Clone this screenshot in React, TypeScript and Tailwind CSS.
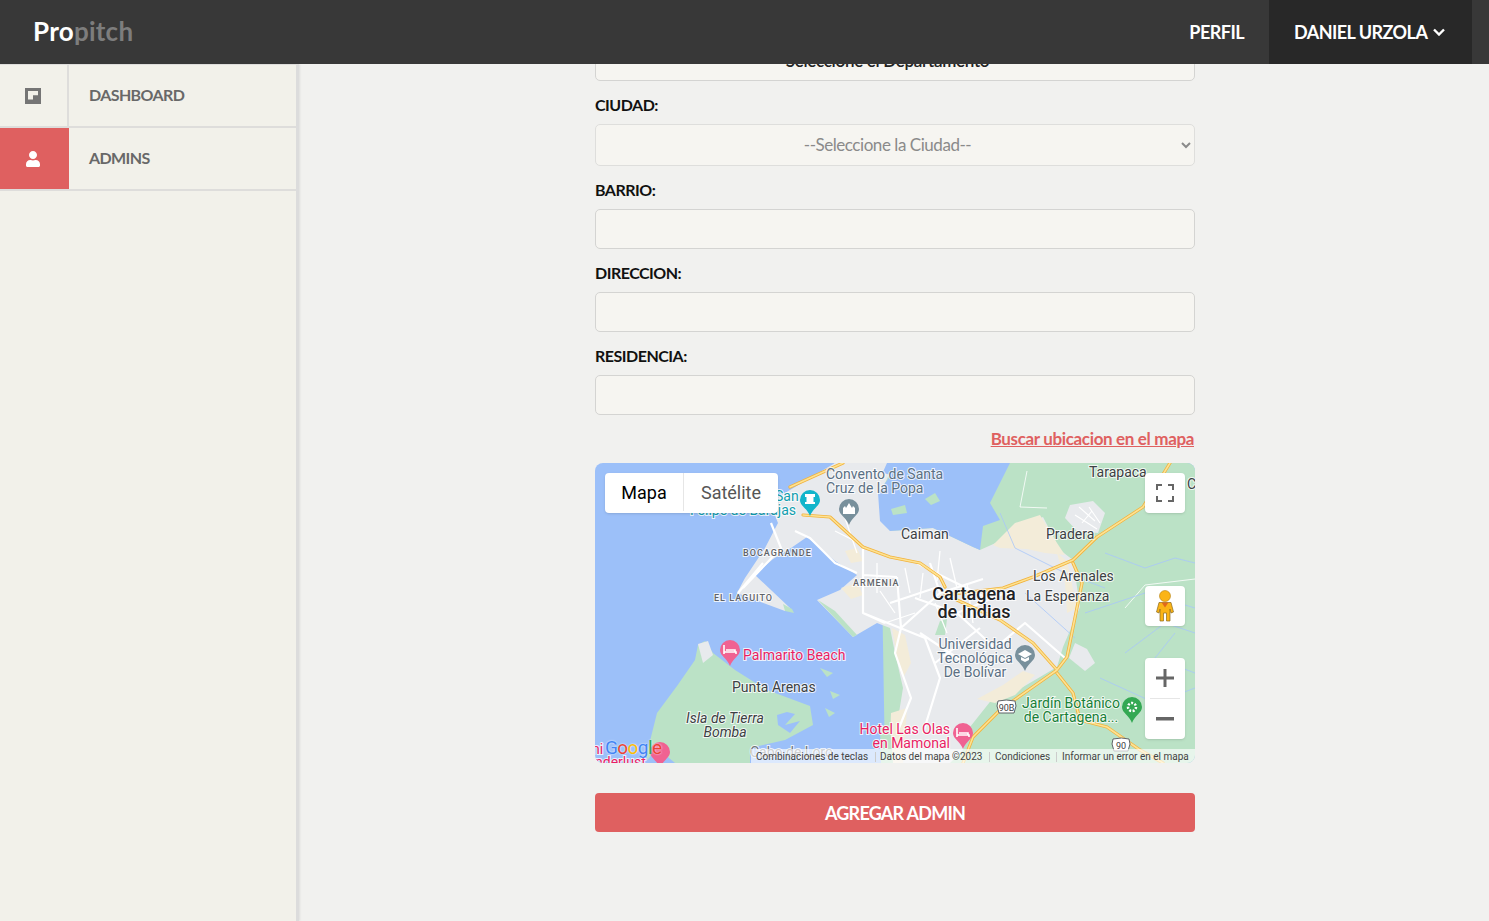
import { FaUser } from "react-icons/fa"

const uiFont = { fontFamily: '"Lato", "Noto Sans", sans-serif' }

const yellowRoads =
  "M195 24 248 0M208 52 235 54 268 84 295 94 325 100 345 114 350 124M362 137 405 157 438 180 462 207M350 132 408 125 438 114 478 97 502 74 548 44 575 0M478 100 487 120 472 194 462 207 405 247 378 274 373 287 368 300M462 210 478 230 485 257 512 264 545 287 568 300"

function FlipIcon() {
  return (
    <svg width="16" height="16" viewBox="0 0 16 16">
      <rect width="16" height="16" fill="#757575" />
      <path d="M3 3h10v4.2H8V11.5H3z" fill="#f2f1ea" />
    </svg>
  )
}

function SideItem({ label, active, icon }: { label: string; active?: boolean; icon: React.ReactNode }) {
  return (
    <div className="flex h-[63px] border-b-2 border-[#dedddb]">
      <div className={`flex w-[69px] shrink-0 items-center justify-center ${active ? "bg-[#df6060] pr-[3px] text-white" : "border-r-2 border-[#dedddb] pr-px"}`}>
        {icon}
      </div>
      <div className="flex flex-1 items-center pb-[2px] pl-5 text-[16px] font-bold tracking-[-0.6px] text-[#686868]">{label}</div>
    </div>
  )
}

function Field({ label, children }: { label: string; children: React.ReactNode }) {
  return (
    <>
      <div className="flex h-[43px] items-end pb-[7px] text-[16px] leading-6 font-bold tracking-[-0.5px] text-[#111]">{label}</div>
      {children}
    </>
  )
}

function TextInput() {
  return <input className="block h-10 w-full rounded-[5px] border border-[#d4d4d2] bg-[#f6f5f1]" />
}

function Label({ x, y, children, fill = "#3c4043", size = 14, weight = 400, italic, anchor = "start", spacing }: {
  x: number
  y: number
  children: string
  fill?: string
  size?: number
  weight?: number
  italic?: boolean
  anchor?: "start" | "middle" | "end"
  spacing?: number
}) {
  return (
    <text
      x={x}
      y={y}
      fill={fill}
      fontSize={size}
      fontWeight={weight}
      fontStyle={italic ? "italic" : "normal"}
      textAnchor={anchor}
      letterSpacing={spacing}
      stroke="#ffffff"
      strokeOpacity="0.8"
      strokeWidth="2"
      paintOrder="stroke"
      fontFamily="Roboto, sans-serif"
    >
      {children}
    </text>
  )
}

function Pin({ x, y, color, r = 10 }: { x: number; y: number; color: string; r?: number }) {
  return (
    <path d={`M${x - r} ${y}a${r} ${r} 0 1 1 ${2 * r} 0c0 6-${r * 0.7} 8-${r} ${r * 1.6}c-${r * 0.3}-${r * 0.8}-${r}-${r * 1}-${r}-${r * 1.6}z`} fill={color} />
  )
}

function MapArt() {
  return (
    <svg viewBox="0 0 600 300" className="block h-[300px] w-[600px]">
      <rect width="600" height="300" fill="#9cc0f9" />
      {/* tierra firme */}
      <path d="M285 0H600V300H290z" fill="#bbe2c6" />
      {/* ciudad */}
      <path
        d="M190 30 240 0H300L285 30 295 68 338 65 378 84 385 87 405 78 430 62 448 54 465 87 478 97 485 144 468 184 462 204 428 224 402 230 375 264 368 287 355 300H300L302 262 308 225 300 190 295 165 282 160 258 174 222 137 245 127 262 112 240 98 212 74 196 85 178 96 160 112 195 145 190 148 142 130 150 115 170 85 183 60 175 40z"
        fill="#e8eaed"
      />
      {/* bahia norte */}
      <path d="M248 0H415L395 40 405 57 388 63 385 87 378 84 338 65 295 68 285 58 283 30 296 12z" fill="#9cc0f9" />
      <path d="M240 0H292L283 20 280 45 262 40 240 32 215 25z" fill="#e8eaed" />
      <path d="M330 36 340 30 345 38 336 42z" fill="#bbe2c6" />
      <path d="M296 46 310 42 312 50 298 52z" fill="#bbe2c6" />
      {/* arena */}
      <path d="M475 42 498 38 510 50 503 70 482 68 470 55z" fill="#e8eaed" />
      <path d="M420 60 445 52 462 80 470 92 450 90 432 86 405 85 398 82z" fill="#f3ecd9" />
      <path d="M462 90 472 98 482 145 472 150 470 120z" fill="#f3ecd9" />
      <path d="M480 180 492 186 500 200 490 208 474 195z" fill="#e8eaed" />
      <path d="M297 165 310 172 316 200 308 215 302 195z" fill="#f3ecd9" />
      <path d="M408 222 428 208 440 212 420 232 400 240 382 236z" fill="#f3ecd9" />
      <path d="M296 250 312 245 308 300H294z" fill="#f3ecd9" />
      <path d="M246 125 262 120 268 132 256 136z" fill="#f3ecd9" />
      <path d="M250 88 262 85 268 98 256 100z" fill="#f3ecd9" />
      <path d="M345 158 352 156 350 172 340 172z" fill="#bbe2c6" />
      <path d="M188 141 197 146 199 150 190 148z" fill="#bbe2c6" />
      <path d="M223 137 235 150 258 174 262 172 240 148z" fill="#bbe2c6" />
      <path d="M285 265 295 258 298 300H286z" fill="#bbe2c6" />
      {/* Tierra Bomba */}
      <path d="M110 178 118 190 140 207 172 227 215 243 218 262 190 277 155 285 155 300H52L52 290 62 250 82 223 100 197 103 182z" fill="#bbe2c6" />
      <path d="M103 181 113 178 118 192 108 200z" fill="#e8eaed" />
      <path d="M182 252 192 249 200 251 190 262 205 258 195 270 183 262z" fill="#9cc0f9" />
      <path d="M175 288 195 280 205 295 195 300H170z" fill="#9cc0f9" />
      <path d="M50 300 62 285 80 300z" fill="#9cc0f9" />
      <path d="M225 205 238 210 232 214zM235 228 245 232 238 236zM230 245 240 250 234 254z" fill="#bbe2c6" />
      {/* calles */}
      <g fill="none" stroke="#ffffff" strokeWidth="2.2" strokeLinejoin="round">
        <path d="M176 60 186 85 148 125M168 100 143 130M200 68 215 75 240 100 262 110M268 85 268 150 290 160M268 112 302 114M268 150 330 175 345 215 328 270M302 114 306 165 300 190 316 235 302 270M306 165 345 130 335 100M320 135 362 150 410 130M345 130 388 116M362 150 400 185 430 160 470 195M322 100 345 112 392 135M295 140 340 125M325 170 370 200M340 200 385 165" />
        <path d="M250 55 262 90M240 68 268 82M285 128 300 150M345 88 342 118M355 95 362 125M372 120 378 160M282 100 282 130M310 105 315 130M328 110 325 135M290 160 320 150M340 140 352 170" strokeWidth="1.3" />
        <path d="M487 60 497 48M480 52 502 66M494 44 505 60M484 44 500 58" strokeWidth="1.1" />
        <path d="M432 8 425 44 452 45M530 145 550 122 600 116" strokeWidth="0.8" />
      </g>
      <g fill="none" stroke="#a8c7fa" strokeWidth="0.8">
        <path d="M405 50 420 85 470 110 510 125M510 90 550 105 580 95 600 100M490 150 550 130 600 145M530 190 570 160 600 170M430 130 480 175M580 170 560 195 600 210M505 215 560 240 600 225" />
      </g>
      <g fill="none" stroke="#f2b33d" strokeWidth="3.2" strokeLinejoin="round" strokeLinecap="round">
        <path d={yellowRoads} />
      </g>
      <g fill="none" stroke="#fde293" strokeWidth="1.6" strokeLinejoin="round" strokeLinecap="round">
        <path d={yellowRoads} />
      </g>
      {/* etiquetas */}
      <Label x={180} y={38} fill="#129eaf">San</Label>
      <Label x={95} y={52} fill="#129eaf">Felipe de Barajas</Label>
      <Pin x={215} y={37} color="#12b5cb" />
      <path d="M210 31h10v3h-1.500v5h1.500v2h-10v-2h1.500v-5h-1.500z" fill="#fff" />
      <Label x={231} y={16} fill="#5b7083">Convento de Santa</Label>
      <Label x={231} y={30} fill="#5b7083">Cruz de la Popa</Label>
      <Pin x={254} y={46} color="#78909c" />
      <path d="M248 51v-6l2-2 1 2 3-5 3 5 1-2 2 2v6z" fill="#fff" />
      <Label x={306} y={76}>Caiman</Label>
      <Label x={494} y={14}>Tarapaca</Label>
      <Label x={592} y={26}>C</Label>
      <Label x={451} y={76}>Pradera</Label>
      <Label x={438} y={118}>Los Arenales</Label>
      <Label x={431} y={138}>La Esperanza</Label>
      <Label x={379} y={137} anchor="middle" size={18} weight={500} fill="#202124">Cartagena</Label>
      <Label x={379} y={155} anchor="middle" size={18} weight={500} fill="#202124">de Indias</Label>
      <Label x={380} y={186} anchor="middle" fill="#5b7083">Universidad</Label>
      <Label x={380} y={200} anchor="middle" fill="#5b7083">Tecnológica</Label>
      <Label x={380} y={214} anchor="middle" fill="#5b7083">De Bolívar</Label>
      <Pin x={430} y={192} color="#78909c" />
      <path d="M423 191 430 187 437 191 430 195zM426 194v3l4 2 4-2v-3l-4 2z" fill="#fff" />
      <Label x={148} y={93} size={9} weight={500} spacing={1} fill="#5f6368">BOCAGRANDE</Label>
      <Label x={258} y={123} size={9} weight={500} spacing={1} fill="#5f6368">ARMENIA</Label>
      <Label x={119} y={138} size={9} weight={500} spacing={1} fill="#5f6368">EL LAGUITO</Label>
      <Pin x={135} y={187} color="#f06292" />
      <path d="M129 182v9M129 189h12v2M131 187h9v2" stroke="#fff" strokeWidth="1.600" fill="none" />
      <Label x={148} y={197} fill="#e91e63">Palmarito Beach</Label>
      <Label x={137} y={229}>Punta Arenas</Label>
      <Label x={130} y={260} anchor="middle" italic>Isla de Tierra</Label>
      <Label x={130} y={274} anchor="middle" italic>Bomba</Label>
      <Label x={355} y={271} anchor="end" fill="#e91e63">Hotel Las Olas</Label>
      <Label x={355} y={285} anchor="end" fill="#e91e63">en Mamonal</Label>
      <Pin x={368} y={270} color="#f06292" />
      <path d="M362 265v9M362 272h12v2M364 270h9v2" stroke="#fff" strokeWidth="1.600" fill="none" />
      <Label x={476} y={245} anchor="middle" fill="#188038">Jardín Botánico</Label>
      <Label x={476} y={259} anchor="middle" fill="#188038">de Cartagena...</Label>
      <Pin x={537} y={244} color="#34a853" />
      <circle cx="537" cy="244" r="4" fill="none" stroke="#fff" strokeWidth="2.500" strokeDasharray="2 1.500" />
      <g>
        <path d="M403 238q8-2 17 0l1 5-2 7h-15l-2-7z" fill="#fff" stroke="#5f6368" />
        <text x="411.500" y="248" textAnchor="middle" fontSize="9" fill="#3c4043" fontFamily="Roboto, sans-serif">90B</text>
      </g>
      <g>
        <path d="M518 276q9-2 16 0l1 5-2 7h-14l-2-7z" fill="#fff" stroke="#5f6368" />
        <text x="526" y="286" textAnchor="middle" fontSize="9" fill="#3c4043" fontFamily="Roboto, sans-serif">90</text>
      </g>
      <Pin x={65} y={289} color="#f06292" />
      <Label x={-3} y={291} fill="#e91e63">ni</Label>
      <Label x={0} y={304} fill="#e91e63">nderlust</Label>
      <Label x={155} y={294} fill="#70757a">Cabo de Loro</Label>
    </svg>
  )
}

function MapBox() {
  return (
    <div className="relative h-[300px] w-full overflow-hidden rounded-lg font-['Roboto',sans-serif]">
      <MapArt />

      <div className="absolute top-[10px] left-[10px] flex h-10 rounded-sm bg-white pb-[2px] text-[18px] shadow-sm">
        <div className="flex w-[79px] items-center justify-center border-r border-[#e6e6e6] text-black">Mapa</div>
        <div className="flex w-[94px] items-center justify-center text-[#565656]">Satélite</div>
      </div>

      <div className="absolute top-[10px] right-[10px] flex h-10 w-10 items-center justify-center rounded-sm bg-white shadow-sm">
        <svg width="18" height="18" viewBox="0 0 18 18" fill="none" stroke="#666" strokeWidth="2">
          <path d="M1 6V1h5M12 1h5v5M17 12v5h-5M6 17H1v-5" />
        </svg>
      </div>

      <div className="absolute top-[123px] right-[10px] flex h-10 w-10 items-center justify-center rounded-sm bg-white shadow-sm">
        <svg width="18" height="32" viewBox="0 0 18 32">
          <circle cx="9" cy="6" r="5.500" fill="#fbb416" stroke="#b57f10" strokeWidth="0.600" />
          <path d="M3 12.500h12l2.500 9.500-2.500 1-1-4V31h-3.500v-8h-3v8H4V19l-1 4-2.500-1z" fill="#fbb416" stroke="#8a6a20" strokeWidth="0.700" />
          <path d="M5.500 12.500h7L9 17.500z" fill="#e0691b" />
        </svg>
      </div>

      <div className="absolute top-[195px] right-[10px] flex w-10 flex-col items-center rounded-sm bg-white shadow-sm">
        <div className="flex h-10 w-full items-center justify-center">
          <svg width="18" height="18" viewBox="0 0 18 18" fill="#666"><path d="M7.500 0h3v7.500H18v3h-7.500V18h-3v-7.500H0v-3h7.500z" /></svg>
        </div>
        <div className="h-px w-[30px] bg-[#e6e6e6]" />
        <div className="flex h-10 w-full items-center justify-center">
          <svg width="18" height="4" viewBox="0 0 18 4" fill="#666"><rect width="18" height="3.500" /></svg>
        </div>
      </div>

      <div className="absolute bottom-[6px] left-[10px] text-[19px] leading-none tracking-[-0.6px] [text-shadow:0_0_2px_#fff]">
        <span className="text-[#4285f4]">G</span>
        <span className="text-[#ea4335]">o</span>
        <span className="text-[#fbbc05]">o</span>
        <span className="text-[#4285f4]">g</span>
        <span className="text-[#34a853]">l</span>
        <span className="text-[#ea4335]">e</span>
      </div>

      <div className="absolute right-0 bottom-0 flex h-[14px] w-[444px] items-center bg-white/65 pt-[2px] text-[10px] leading-none whitespace-nowrap text-[#444]">
        <span className="w-[124px] pl-[5px]">Combinaciones de teclas</span>
        <span className="w-[114px] border-l border-[#ccc] pl-[4px]">Datos del mapa ©2023</span>
        <span className="w-[67px] border-l border-[#ccc] pl-[5px]">Condiciones</span>
        <span className="border-l border-[#ccc] pl-[5px]">Informar un error en el mapa</span>
      </div>
    </div>
  )
}

export default function App() {
  return (
    <div className="flex h-screen flex-col overflow-hidden bg-[#f1f1ef]" style={uiFont}>
      <header className="relative z-10 flex h-16 shrink-0 items-center justify-between bg-[#383838] pr-[17px] pl-[33px]">
        <div className="pb-[2px] text-[26px] font-bold tracking-[0.25px]">
          <span className="text-white">Pro</span>
          <span className="text-[#7d7d7d]">pitch</span>
        </div>
        <div className="flex h-full items-center text-[18px] font-bold tracking-[-0.55px] text-white">
          <span className="px-[25px]">PERFIL</span>
          <div className="flex h-full w-[203px] items-center gap-[6px] bg-[#282828] pl-[25px]">
            DANIEL URZOLA
            <svg width="12" height="8" viewBox="0 0 12 8" fill="none" stroke="#fff" strokeWidth="2.400"><path d="M1 1.500 6 6.500 11 1.500" /></svg>
          </div>
        </div>
      </header>

      <div className="flex min-h-0 flex-1">
        <aside className="w-[299px] shrink-0 border-t border-[#dedddb] border-r-[3px] border-r-[#dcdcdc] bg-[#f2f1ea] shadow-[1px_0_2px_rgba(0,0,0,0.08)]">
          <SideItem label="DASHBOARD" icon={<FlipIcon />} />
          <SideItem label="ADMINS" active icon={<FaUser className="text-[16px]" />} />
        </aside>

        <main className="min-w-0 flex-1 overflow-hidden pl-[296px]">
          <form className="mt-[-25px] w-[600px]">
            <select className="block h-[42px] w-full rounded-[5px] border border-[#d4d4d2] bg-[#f6f5f1] pr-[3px] text-center text-[17px] font-semibold tracking-[-0.3px] text-[#222]">
              <option>Seleccione el Departamento</option>
            </select>
            <Field label="CIUDAD:">
              <select className="block h-[42px] w-full rounded-[5px] border border-[#dededc] bg-[#f6f5f1] pr-[3px] pb-px text-center text-[17px] tracking-[-0.45px] text-[#8a8a8a]">
                <option>--Seleccione la Ciudad--</option>
              </select>
            </Field>
            <Field label="BARRIO:"><TextInput /></Field>
            <Field label="DIRECCION:"><TextInput /></Field>
            <Field label="RESIDENCIA:"><TextInput /></Field>
            <div className="flex h-12 items-center justify-end pr-px">
              <a className="text-[17px] font-bold tracking-[-0.35px] text-[#df6060] underline">Buscar ubicacion en el mapa</a>
            </div>
            <MapBox />
            <button type="button" className="mt-[30px] block h-[39px] w-full rounded-[4px] bg-[#df6060] pt-px text-[18px] font-bold tracking-[-0.75px] text-white">
              AGREGAR ADMIN
            </button>
          </form>
        </main>
      </div>
    </div>
  )
}
